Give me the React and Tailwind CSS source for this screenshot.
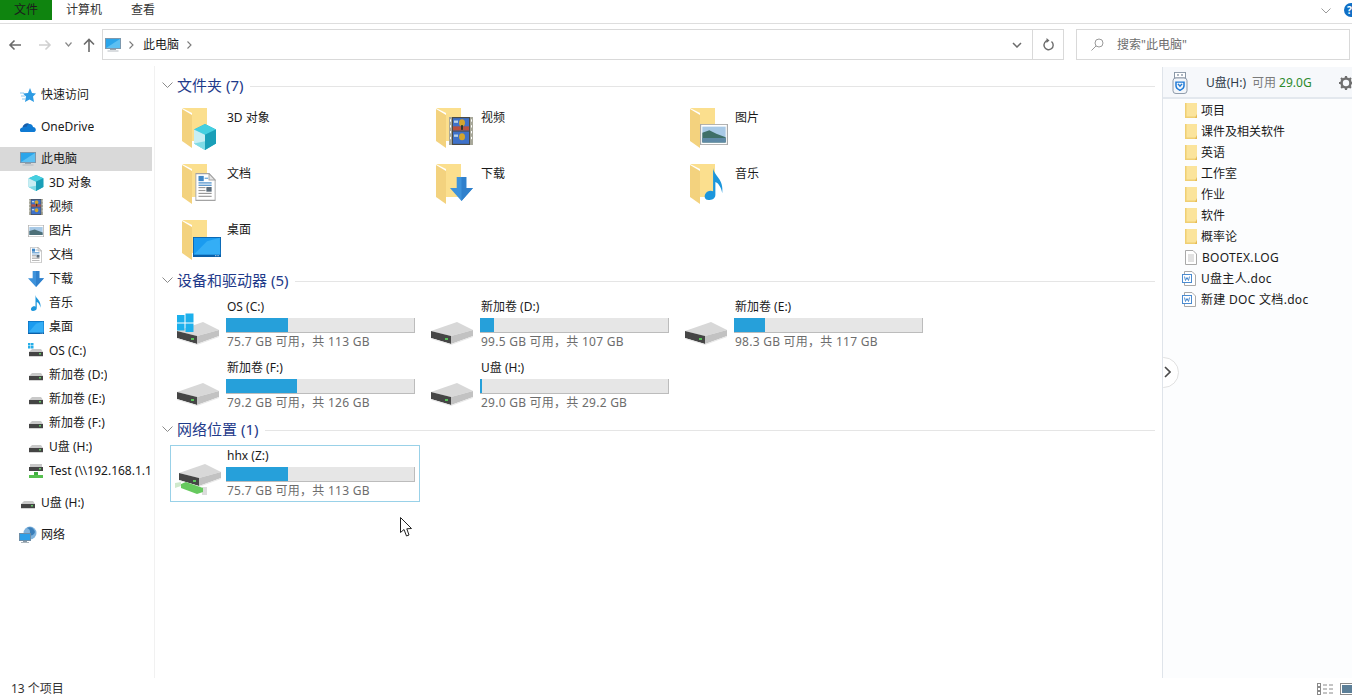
import React from "react";

const Svg = ({ x, y, w = 24, h = 24, vb = "0 0 24 24", children, className }) => (
  <svg x={x} y={y} width={w} height={h} viewBox={vb} className={className} preserveAspectRatio="none">{children}</svg>
);

const Cube = (p) => (
  <Svg {...p}>
    <polygon points="12,0 23,5 23,18 12,24 1,18 1,5" fill="#2fb7cc" />
    <polygon points="12,0 23,5 12,10 1,5" fill="#45cfe0" />
    <polygon points="1,5 12,10 12,24 1,18" fill="#c8eef3" />
    <polygon points="12,10 23,5 23,18 12,24" fill="#1a9fb8" />
    <polygon points="1,18 12,24 12,16" fill="#7fdbe6" />
  </Svg>
);
const Film = (p) => (
  <Svg {...p}>
    <rect x="0" y="0" width="24" height="24" fill="#4b4b45" />
    <rect x="0" y="0" width="3" height="24" fill="#a8a89a" />
    <rect x="21" y="0" width="3" height="24" fill="#a8a89a" />
    <rect x="4" y="1" width="16" height="10.5" fill="#3e71c9" />
    <rect x="4" y="12.5" width="16" height="10.5" fill="#3e71c9" />
    <rect x="4" y="8" width="16" height="3.5" fill="#b7503f" />
    <circle cx="13" cy="5" r="3" fill="#d3a52e" />
    <circle cx="13" cy="17" r="3" fill="#d3a52e" />
    <rect x="12" y="7" width="2" height="4" fill="#2c3a28" />
    <rect x="5" y="3" width="4" height="2" fill="#b9d3e8" />
    <rect x="5" y="15" width="4" height="2" fill="#b9d3e8" />
    <rect x="1" y="2" width="1" height="2" fill="#fff" />
    <rect x="1" y="7" width="1" height="2" fill="#fff" />
    <rect x="1" y="12" width="1" height="2" fill="#fff" />
    <rect x="1" y="17" width="1" height="2" fill="#fff" />
    <rect x="22" y="2" width="1" height="2" fill="#fff" />
    <rect x="22" y="7" width="1" height="2" fill="#fff" />
    <rect x="22" y="12" width="1" height="2" fill="#fff" />
    <rect x="22" y="17" width="1" height="2" fill="#fff" />
  </Svg>
);
const Picture = (p) => (
  <Svg {...p}>
    <rect x="0.5" y="0.5" width="23" height="23" fill="#fff" stroke="#a9a9a9" />
    <rect x="2" y="3" width="20" height="18" fill="#a8c9e6" />
    <polygon points="2,10 8,7 14,11 22,15 22,21 2,21" fill="#3f6f68" />
    <rect x="2" y="16" width="20" height="5" fill="#5e89a6" />
  </Svg>
);
const Doc = (p) => (
  <Svg {...p}>
    <polygon points="1,0.5 16,0.5 23,6 23,23.5 1,23.5" fill="#fff" stroke="#a3a3a3" />
    <polygon points="16,0.5 16,6 23,6" fill="#e6e6e6" stroke="#a3a3a3" />
    <rect x="4" y="2.5" width="6" height="4.5" fill="#3f87c7" />
    <rect x="11" y="4" width="4" height="1" fill="#5fa0d6" />
    <rect x="4" y="8" width="15" height="1" fill="#3f87c7" />
    <rect x="4" y="10" width="15" height="1" fill="#3f87c7" />
    <rect x="13" y="12" width="6" height="4" fill="#5a6b7a" />
    <rect x="4" y="12" width="8" height="1" fill="#999" />
    <rect x="4" y="14.5" width="8" height="1" fill="#999" />
    <rect x="4" y="17" width="15" height="1" fill="#999" />
    <rect x="4" y="19.5" width="15" height="1" fill="#999" />
  </Svg>
);
const Down = (p) => (
  <Svg {...p}>
    <polygon points="7,0 17,0 17,11 24,11 12,24 0,11 7,11" fill="#3d92db" />
    <polygon points="12,24 24,11 17,11 17,0 12,0" fill="#2f80cc" />
  </Svg>
);
const Note = (p) => (
  <Svg {...p}>
    <path d="M11 0 C12 6 23 8 21 19 C20 14 16 11 13.5 10.5 L13.5 20 C13.5 23 9.5 24 6 24 C2 24 1 21.5 2.5 19.5 C4.5 17 8.5 16.5 11 17.5 Z" fill="#1c96dc" />
  </Svg>
);
const Desk = (p) => (
  <Svg {...p}>
    <rect x="0" y="0" width="24" height="24" fill="#0a5fa8" />
    <rect x="0.7" y="1" width="22.6" height="20" fill="#1a9bf0" />
    <polygon points="0.7,21 12,5 23,1 23.3,21" fill="#34aef6" />
    <rect x="19" y="22" width="1" height="1" fill="#fff" />
    <rect x="21" y="22" width="1" height="1" fill="#fff" />
  </Svg>
);

const Folder = ({ children }) => (
  <svg width="44" height="44" viewBox="0 0 44 44" className="shrink-0">
    <polygon points="0,0 25,0 25,33 10,33 10,5" fill="#fbdf8e" />
    <polygon points="0,1 10,7 10,40 0,33" fill="#f3d27e" />
    {children}
  </svg>
);

const FOLDERS = [
  ["3D 对象", <Cube x={11} y={16} w={24} h={26} />],
  ["视频", <Film x={13} y={9} w={24} h={28} />],
  ["图片", <Picture x={10} y={16} w={28} h={21} />],
  ["文档", <Doc x={13} y={9} w={21} h={28} />],
  ["下载", <Down x={14} y={13} w={23} h={24} />],
  ["音乐", <Note x={13} y={4} w={22} h={32} />],
  ["桌面", <Desk x={11} y={17} w={28} h={20} />],
];

const DriveShape = () => (
  <g>
    <polygon points="3,20 29,11 45,19 23,25" fill="#d8d8d8" />
    <polygon points="3,20 23,25 23,33 3,27" fill="#454545" />
    <polygon points="23,25 45,19 45,25 23,33" fill="#c2c2c2" />
    <rect x="17" y="27" width="3" height="2" fill="#58c25a" />
    <polygon points="3,27 23,33 45,25 45,26 23,34 3,28" fill="#e8e8e8" />
  </g>
);

const BigDrive = ({ win, net }) => (
  <svg width="50" height="40" viewBox="0 0 50 40" className="shrink-0">
    {net && (
      <g>
        <polygon points="1,23 7,22 7,26 1,28" fill="#cfe9cc" />
        <rect x="28" y="27" width="5" height="8" fill="#dcdcdc" />
      </g>
    )}
    {net ? <g transform="translate(2 -7)"><DriveShape /></g> : <DriveShape />}
    {win && (
      <g fill="#1cb0ec">
        <rect x="3" y="4" width="7.5" height="7.5" />
        <rect x="11.5" y="2.5" width="8" height="9" />
        <rect x="3" y="12.5" width="7.5" height="7" />
        <rect x="11.5" y="12.5" width="8" height="8.5" />
      </g>
    )}
    {net && <polygon points="7,24 12,22 29,28 29,32 23,34 7,28" fill="#66c95e" />}
  </svg>
);

const Bar = ({ pct }) => (
  <div className="w-[189px] h-[15px] bg-[#e6e6e6] border-r border-b border-[#bcbcbc]">
    <div className="h-full bg-[#26a0da]" style={{ width: `${pct}%` }} />
  </div>
);

const DriveBody = ({ name, used, sub }) => (
  <div className="flex flex-col pt-[2px]">
    <div className="h-[16px] leading-[16px] text-[12px] text-[#1a1a1a] pl-px">{name}</div>
    <div className="mt-[3px]"><Bar pct={used} /></div>
    <div className="h-[16px] leading-[16px] mt-[1px] text-[12px] text-[#6d6d6d] tracking-[0.25px] pl-px">{sub}</div>
  </div>
);

const DRIVES = [
  { name: "OS (C:)", used: 33, sub: "75.7 GB 可用，共 113 GB", win: true },
  { name: "新加卷 (D:)", used: 7.5, sub: "99.5 GB 可用，共 107 GB" },
  { name: "新加卷 (E:)", used: 16.5, sub: "98.3 GB 可用，共 117 GB" },
  { name: "新加卷 (F:)", used: 37.5, sub: "79.2 GB 可用，共 126 GB" },
  { name: "U盘 (H:)", used: 1, sub: "29.0 GB 可用，共 29.2 GB" },
];

const Chevron = () => (
  <svg width="11" height="6" viewBox="0 0 11 6" className="shrink-0">
    <path d="M0.5 0.5 L5.5 5.5 L10.5 0.5" fill="none" stroke="#8a8a8a" />
  </svg>
);

const SectionHead = ({ title }) => (
  <div className="flex items-center h-5">
    <Chevron />
    <span className="ml-[4px] text-[15px] leading-5 text-[#1e3a8a] whitespace-nowrap">{title}</span>
    <div className="ml-[7px] flex-1 h-px bg-[#e5e5e5] mt-[2px]" />
  </div>
);

const SmallDrive = () => (
  <svg width="16" height="16" viewBox="0 0 16 16" className="shrink-0">
    <polygon points="1,9 4,6 13,6 15,9" fill="#c9c9c9" />
    <rect x="1" y="9" width="14" height="4" fill="#444" />
    <rect x="11" y="10" width="2" height="1.5" fill="#62c464" />
    <rect x="1" y="13" width="14" height="1" fill="#d5d5d5" />
  </svg>
);
const SmallC = () => (
  <svg width="16" height="16" viewBox="0 0 16 16" className="shrink-0">
    <g fill="#27aee8">
      <rect x="0" y="0" width="2.5" height="2.5" /><rect x="3" y="0" width="2.5" height="2.5" />
      <rect x="0" y="3" width="2.5" height="2.5" /><rect x="3" y="3" width="2.5" height="2.5" />
    </g>
    <polygon points="1,9 4,6 13,6 15,9" fill="#c9c9c9" />
    <rect x="1" y="9" width="14" height="4" fill="#444" />
    <rect x="11" y="10" width="2" height="1.5" fill="#62c464" />
    <rect x="1" y="13" width="14" height="1" fill="#d5d5d5" />
  </svg>
);
const SmallNet = () => (
  <svg width="16" height="16" viewBox="0 0 16 16" className="shrink-0">
    <rect x="2" y="1" width="12" height="3" fill="#c9c9c9" />
    <rect x="1" y="4" width="14" height="4" fill="#444" />
    <rect x="11" y="5" width="2" height="1.5" fill="#62c464" />
    <rect x="6" y="9" width="4" height="3" fill="#3fae3f" />
    <rect x="1" y="12" width="14" height="3" fill="#56c04f" />
  </svg>
);
const Monitor = ({ w = 16, h = 16 }) => (
  <svg width={w} height={h} viewBox="0 0 16 16" className="shrink-0">
    <rect x="0.5" y="1.5" width="15" height="10" fill="#2ba5ea" stroke="#7d98ad" />
    <polygon points="1,11 15,2 15,11" fill="#5cc0f2" />
    <rect x="5" y="12" width="6" height="1" fill="#9aa5ad" />
    <rect x="2.5" y="13.5" width="11" height="1" fill="#b5bcc2" />
  </svg>
);
const Star = () => (
  <svg width="16" height="16" viewBox="0 0 16 16" className="shrink-0">
    <polygon points="10,1 12,6 16,6.5 13,9.5 14,15 9.5,12.5 5,15 6,9.5 3,6.5 8,6" fill="#2d9be3" />
    <path d="M0 6 H4 M1 9 H5 M2 12 H6" stroke="#8cc8ef" />
  </svg>
);
const Cloud = () => (
  <svg width="16" height="16" viewBox="0 0 16 16" className="shrink-0">
    <path d="M1 13 C-1 12 0 8.5 2.5 8.5 C3 5.5 6.5 3.5 9 5 C11 4.5 13 6 13 8 C15 8 16.5 10 15.5 12 C15 13 14 13 13 13 Z" fill="#0f7ad3" />
    <path d="M2.5 8.5 C3 5.5 6.5 3.5 9 5 C7.5 5.5 7 6.5 6.5 8 C5 7.5 3.5 8 2.5 8.5 Z" fill="#1a5da8" />
  </svg>
);
const Globe = () => (
  <svg width="18" height="18" viewBox="0 0 18 18" className="shrink-0">
    <circle cx="11" cy="7" r="6.5" fill="#7fb3dd" />
    <path d="M8 2 C11 3 12 6 10 9 C13 10 15 9 16 6 C15 2 11 0 8 2 Z" fill="#3c7fb9" />
    <rect x="0.5" y="7.5" width="11" height="7" fill="#2d9fe8" stroke="#6d8ea8" />
    <rect x="4" y="15" width="4" height="1" fill="#8a9aa6" />
    <rect x="2" y="16" width="8" height="1" fill="#a9b4bc" />
  </svg>
);

const Row = ({ icon, label, level = 0, selected, cut }) => (
  <div className={`h-6 flex items-center ${selected ? "bg-[#d9d9d9] w-[152px]" : ""} ${level === 0 ? "pl-[20px]" : "pl-[28px]"}`}>
    <div className="w-4 flex justify-center shrink-0">{icon}</div>
    <span className={`ml-[5px] text-[12px] text-[#1a1a1a] whitespace-nowrap overflow-hidden ${cut ? "w-[103px]" : ""}`}>{label}</span>
  </div>
);

const I16 = { w: 16, h: 16 };

const Sidebar = () => (
  <aside className="w-[155px] shrink-0 border-r border-[#f1f1f1] pt-[17px] flex flex-col gap-2">
    <Row icon={<Star />} label="快速访问" />
    <Row icon={<Cloud />} label="OneDrive" />
    <div className="flex flex-col">
      <Row icon={<Monitor />} label="此电脑" selected />
      <Row level={1} icon={<Cube {...I16} />} label="3D 对象" />
      <Row level={1} icon={<Film w={14} h={16} />} label="视频" />
      <Row level={1} icon={<Svg w={16} h={12}><rect x="0.5" y="0.5" width="23" height="23" fill="#fff" stroke="#a9a9a9" /><rect x="2" y="4" width="20" height="16" fill="#a8c9e6" /><polygon points="2,12 10,9 22,15 22,20 2,20" fill="#4c6f78" /></Svg>} label="图片" />
      <Row level={1} icon={<Doc w={12} h={16} />} label="文档" />
      <Row level={1} icon={<Down {...I16} />} label="下载" />
      <Row level={1} icon={<Note w={12} h={16} />} label="音乐" />
      <Row level={1} icon={<Desk w={16} h={13} />} label="桌面" />
      <Row level={1} icon={<SmallC />} label="OS (C:)" />
      <Row level={1} icon={<SmallDrive />} label="新加卷 (D:)" />
      <Row level={1} icon={<SmallDrive />} label="新加卷 (E:)" />
      <Row level={1} icon={<SmallDrive />} label="新加卷 (F:)" />
      <Row level={1} icon={<SmallDrive />} label="U盘 (H:)" />
      <Row level={1} icon={<SmallNet />} label="Test (\\192.168.1.105)" cut />
    </div>
    <Row icon={<SmallDrive />} label="U盘 (H:)" />
    <Row icon={<Globe />} label="网络" />
  </aside>
);

const Main = () => (
  <main className="flex-1 min-w-0 pl-[7px] pr-[7px] pt-[9px]">
    <SectionHead title="文件夹 (7)" />
    <div className="grid grid-cols-[254px_254px_254px] ml-[8px] mt-[7px]">
      {FOLDERS.map(([name, glyph]) => (
        <div key={name} className="h-14 flex pl-3 pt-[6px]">
          <Folder>{glyph}</Folder>
          <span className="ml-[1px] text-[12px] leading-5 text-[#1a1a1a]">{name}</span>
        </div>
      ))}
    </div>
    <SectionHead title="设备和驱动器 (5)" />
    <div className="grid grid-cols-[254px_254px_254px] ml-[8px] mt-[6px]">
      {DRIVES.map((d) => (
        <div key={d.name} className="h-[61px] flex pl-[4px] pt-[1px]">
          <div className="pt-[14px]"><BigDrive win={d.win} /></div>
          <div className="ml-[2px]"><DriveBody {...d} /></div>
        </div>
      ))}
    </div>
    <div className="mt-[1px]"><SectionHead title="网络位置 (1)" /></div>
    <div className="ml-[8px] mt-[6px] w-[250px] h-[57px] border border-[#99d1e8] flex pl-[3px]">
      <div className="pt-[14px]"><BigDrive net /></div>
      <div className="ml-[2px]"><DriveBody name="hhx (Z:)" used={33} sub="75.7 GB 可用，共 113 GB" /></div>
    </div>
  </main>
);

const TreeFolder = () => (
  <svg width="12" height="15" viewBox="0 0 12 15" className="shrink-0">
    <rect x="0" y="0" width="12" height="15" fill="#fbe49c" />
    <rect x="0" y="0" width="1.5" height="15" fill="#f0cf73" />
    <rect x="0" y="13.5" width="12" height="1.5" fill="#f0cf73" />
    <polygon points="10,15 12,11 12,15" fill="#e6bb55" />
  </svg>
);
const TreeDoc = () => (
  <svg width="12" height="15" viewBox="0 0 12 15" className="shrink-0">
    <path d="M0.5 0.5 H8 L11.5 4 V14.5 H0.5 Z" fill="#fff" stroke="#a9a9a9" />
    <path d="M3 5 H9 M3 7 H9 M3 9 H9 M3 11 H9" stroke="#c4c4c4" />
  </svg>
);
const WordDoc = () => (
  <svg width="14" height="15" viewBox="0 0 14 15" className="shrink-0">
    <path d="M2.5 0.5 H10 L13.5 4 V14.5 H2.5 Z" fill="#fff" stroke="#a9a9a9" />
    <rect x="0.5" y="3.5" width="9" height="8" fill="#fff" stroke="#4a8bd0" />
    <path d="M2.5 5.5 L3.5 9.5 L5 6.5 L6.5 9.5 L7.5 5.5" fill="none" stroke="#4a8bd0" />
  </svg>
);

const TREE = [
  ["项目", "f"], ["课件及相关软件", "f"], ["英语", "f"], ["工作室", "f"], ["作业", "f"], ["软件", "f"], ["概率论", "f"],
  ["BOOTEX.LOG", "t"], ["U盘主人.doc", "w"], ["新建 DOC 文档.doc", "w"],
];

const Gear = () => (
  <svg width="14" height="14" viewBox="0 0 14 14" className="shrink-0">
    <circle cx="7" cy="7" r="4.5" fill="none" stroke="#6f6f6f" strokeWidth="2.6" />
    <path d="M7 0 V14 M0 7 H14 M2 2 L12 12 M12 2 L2 12" stroke="#6f6f6f" strokeWidth="2.2" strokeDasharray="2.4 9.2 2.4" />
  </svg>
);
const UsbShield = () => (
  <svg width="16" height="22" viewBox="0 0 16 24" className="shrink-0" preserveAspectRatio="none">
    <rect x="2.5" y="0.5" width="11" height="6" fill="#fff" stroke="#8a97a6" />
    <rect x="5" y="2.5" width="2" height="1.5" fill="#8a97a6" />
    <rect x="9" y="2.5" width="2" height="1.5" fill="#8a97a6" />
    <rect x="1" y="6.5" width="14" height="17" rx="3" fill="#f3f6fa" stroke="#8a97a6" />
    <path d="M4 11 H12 V15 C12 17 10 19 8 20 C6 19 4 17 4 15 Z" fill="none" stroke="#1f7ad6" strokeWidth="1.5" />
    <path d="M6 13 L8 15.5 L10 13" fill="none" stroke="#1f7ad6" strokeWidth="1.5" />
  </svg>
);

const RightPanel = () => (
  <aside className="w-[190px] shrink-0 bg-[#fcfdfe] border-l border-[#dfe4ea] mt-px flex flex-col">
    <div className="h-[32px] bg-[#f6f8fb] border-b-2 border-[#e3e8ee] flex items-center pl-[9px] pt-px whitespace-nowrap overflow-hidden">
      <UsbShield />
      <span className="ml-[18px] text-[12px] text-[#2f3b4a]">U盘(H:)</span>
      <span className="ml-[6px] text-[12px] text-[#7a7a7a]">可用</span>
      <span className="ml-[3px] text-[12px] text-[#2c8a2c]">29.0G</span>
      <div className="ml-[19px] w-px h-[14px] bg-[#bdbdbd]" />
      <div className="ml-[8px]"><Gear /></div>
    </div>
    <div className="flex flex-col pt-[1px]">
      {TREE.map(([name, kind]) => (
        <div key={name} className={`h-[21px] flex items-center ${kind === "w" ? "pl-[19px]" : "pl-[22px]"}`}>
          {kind === "f" ? <TreeFolder /> : kind === "t" ? <TreeDoc /> : <WordDoc />}
          <span className={`${kind === "f" ? "ml-[4px]" : "ml-[5px] tracking-[0.3px]"} text-[12px] text-[#1a1a1a] whitespace-nowrap`}>{name}</span>
        </div>
      ))}
    </div>
  </aside>
);

const Toolbar = () => (
  <div className="h-[42px] shrink-0 flex items-start pt-[5px] whitespace-nowrap">
    <div className="w-[102px] shrink-0 h-[31px] flex items-center">
      <svg width="14" height="12" viewBox="0 0 14 12" className="ml-[8px]"><path d="M13 6 H2 M6.5 1.5 L2 6 L6.5 10.5" fill="none" stroke="#6b6b6b" strokeWidth="1.6" /></svg>
      <svg width="14" height="12" viewBox="0 0 14 12" className="ml-[16px]"><path d="M1 6 H12 M7.5 1.5 L12 6 L7.5 10.5" fill="none" stroke="#d0d0d0" strokeWidth="1.6" /></svg>
      <svg width="7" height="5" viewBox="0 0 7 5" className="ml-[13px]"><path d="M0.5 0.5 L3.5 4 L6.5 0.5" fill="none" stroke="#8a8a8a" strokeWidth="1.2" /></svg>
      <svg width="12" height="14" viewBox="0 0 12 14" className="ml-[11px]"><path d="M6 14 V2 M1 6.5 L6 1.5 L11 6.5" fill="none" stroke="#6b6b6b" strokeWidth="1.6" /></svg>
    </div>
    <div className="w-[962px] shrink-0 h-[31px] border border-[#d9d9d9] flex items-center">
      <div className="ml-[2px]"><Monitor w={16} h={16} /></div>
      <svg width="5" height="8" viewBox="0 0 5 8" className="ml-[8px]"><path d="M0.5 0.5 L4 4 L0.5 7.5" fill="none" stroke="#7a7a7a" strokeWidth="1.1" /></svg>
      <span className="ml-[9px] text-[12px] text-[#1a1a1a]">此电脑</span>
      <svg width="5" height="8" viewBox="0 0 5 8" className="ml-[8px]"><path d="M0.5 0.5 L4 4 L0.5 7.5" fill="none" stroke="#7a7a7a" strokeWidth="1.1" /></svg>
      <div className="flex-1" />
      <svg width="10" height="6" viewBox="0 0 10 6" className="mr-[10px]"><path d="M1 1 L5 5 L9 1" fill="none" stroke="#6b6b6b" strokeWidth="1.5" /></svg>
      <div className="w-px h-full bg-[#d9d9d9]" />
      <div className="w-[30px] flex justify-center">
        <svg width="12" height="13" viewBox="0 0 12 13"><path d="M9.5 3.5 A4.6 4.6 0 1 1 6 2.5" fill="none" stroke="#6b6b6b" strokeWidth="1.4" /><path d="M4.5 0 L7.5 2.5 L4.5 5 Z" fill="#6b6b6b" /></svg>
      </div>
    </div>
    <div className="ml-[12px] w-[274px] shrink-0 h-[31px] border border-[#d9d9d9] flex items-center">
      <svg width="13" height="13" viewBox="0 0 13 13" className="ml-[14px]"><circle cx="8" cy="5" r="4" fill="none" stroke="#9a9a9a" /><path d="M5 8 L0.5 12.5" stroke="#9a9a9a" /></svg>
      <span className="ml-[13px] text-[12px] text-[#6d6d6d]">搜索"此电脑"</span>
    </div>
  </div>
);

export default function App() {
  return (
    <div className="relative w-[1352px] h-[696px] overflow-hidden bg-white flex flex-col font-['Noto_Sans','Noto_Sans_CJK_SC',sans-serif]">
      <header className="h-6 shrink-0 border-b border-[#dedede] flex items-start text-[12px] text-[#333]">
        <div className="w-[52px] h-5 bg-[#0f840f] text-[#1c1c1c] flex items-center justify-center">文件</div>
        <div className="ml-[14px] h-5 flex items-center">计算机</div>
        <div className="ml-[29px] h-5 flex items-center">查看</div>
        <div className="flex-1" />
        <svg width="10" height="6" viewBox="0 0 10 6" className="mt-[8px] mr-[13px]"><path d="M0.5 0.5 L5 5 L9.5 0.5" fill="none" stroke="#9a9a9a" /></svg>
        <div className="w-[8px] h-[14px] mt-[3px] bg-[#0f6fc6] rounded-l-full text-white text-[10px] leading-[14px] overflow-hidden pl-[3px] font-bold">?</div>
      </header>
      <Toolbar />
      <div className="flex-1 min-h-0 flex">
        <Sidebar />
        <Main />
        <RightPanel />
      </div>
      <footer className="h-[18px] shrink-0 flex items-start pl-[11px] pt-[4px] text-[12px] leading-[14px] text-[#333]">
        <span>13 个项目</span>
        <div className="flex-1" />
        <svg width="16" height="13" viewBox="0 0 16 13" className="mr-[7px] mt-[1px]">
          <rect x="0.5" y="0.5" width="3" height="3" fill="none" stroke="#8a8a8a" />
          <rect x="0.5" y="4.5" width="3" height="3" fill="none" stroke="#8a8a8a" />
          <rect x="0.5" y="8.5" width="3" height="3" fill="none" stroke="#8a8a8a" />
          <path d="M6 2 H10 M12 2 H16 M6 6 H10 M12 6 H16 M6 10 H10 M12 10 H16" stroke="#8a8a8a" />
        </svg>
        <svg width="12" height="12" viewBox="0 0 12 12" className="mt-[1px]">
          <rect x="0.5" y="0.5" width="14" height="11" fill="#fff" stroke="#8a8a8a" />
          <rect x="2" y="2" width="10" height="8" fill="#5c7f98" />
        </svg>
      </footer>
      <div className="absolute left-[1163px] top-[357px] w-[16px] h-[31px] overflow-hidden">
        <div className="absolute -left-[15px] top-0 w-[31px] h-[31px] rounded-full bg-white border border-[#e1e1e1]" />
        <svg width="7" height="12" viewBox="0 0 7 12" className="absolute left-[1px] top-[9px]"><path d="M1 1 L6 6 L1 11" fill="none" stroke="#4a4a4a" strokeWidth="1.6" /></svg>
      </div>
      <svg width="14" height="21" viewBox="0 0 14 21" className="absolute left-[400px] top-[517px]">
        <path d="M0.5 0.5 V15.5 L4 12.5 L6.5 19 L9 18 L6.8 11.8 L11.5 11.5 Z" fill="#fff" stroke="#222" />
      </svg>
    </div>
  );
}
